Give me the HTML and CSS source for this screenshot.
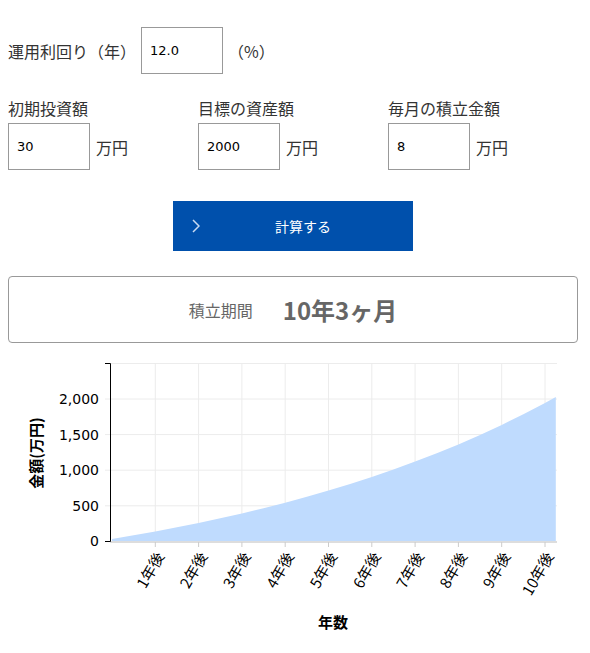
FILE: index.html
```html
<!DOCTYPE html>
<html lang="ja">

<head>
    <meta charset="UTF-8">
    <meta name="viewport" content="width=device-width, initial-scale=1.0">
    <title>積立シミュレーション</title>
    <link rel="stylesheet" href="styles.css">
</head>

<body>
    <main class="calc">
        <!-- 利回り -->
        <div class="rate-row">
            <label class="rate-label" for="rate">運用利回り（年）</label>
            <input type="text" id="rate" class="field" value="12.0">
            <span class="unit unit-rate">（%）</span>
        </div>

        <!-- 金額の入力 -->
        <div class="amount-grid">
            <div class="amount-item">
                <label class="amount-label" for="initial">初期投資額</label>
                <div class="amount-input">
                    <input type="text" id="initial" class="field" value="30">
                    <span class="unit">万円</span>
                </div>
            </div>
            <div class="amount-item">
                <label class="amount-label" for="target">目標の資産額</label>
                <div class="amount-input">
                    <input type="text" id="target" class="field" value="2000">
                    <span class="unit">万円</span>
                </div>
            </div>
            <div class="amount-item">
                <label class="amount-label" for="monthly">毎月の積立金額</label>
                <div class="amount-input">
                    <input type="text" id="monthly" class="field" value="8">
                    <span class="unit">万円</span>
                </div>
            </div>
        </div>

        <button type="button" class="calc-btn">
            <svg class="calc-btn__arrow" width="8" height="14" viewBox="0 0 8 14">
                <path d="M1 1 L7 7 L1 13" fill="none" stroke="#c9dbf2" stroke-width="1.5" />
            </svg>
            <span class="calc-btn__text">計算する</span>
        </button>

        <div class="result">
            <span class="result-label">積立期間</span>
            <span class="result-value">10年3ヶ月</span>
        </div>
    </main>

    <!-- グラフ -->
    <svg class="chart" width="590" height="300" viewBox="0 350 590 300">
        <!-- grid -->
        <g class="grid">
            <line x1="110" y1="363.5" x2="557" y2="363.5" />
            <line x1="105" y1="399" x2="557" y2="399" />
            <line x1="105" y1="434.6" x2="557" y2="434.6" />
            <line x1="105" y1="470.2" x2="557" y2="470.2" />
            <line x1="105" y1="505.8" x2="557" y2="505.8" />
            <line x1="155.3" y1="363" x2="155.3" y2="541" />
            <line x1="198.6" y1="363" x2="198.6" y2="541" />
            <line x1="241.9" y1="363" x2="241.9" y2="541" />
            <line x1="285.2" y1="363" x2="285.2" y2="541" />
            <line x1="328.5" y1="363" x2="328.5" y2="541" />
            <line x1="371.8" y1="363" x2="371.8" y2="541" />
            <line x1="415.1" y1="363" x2="415.1" y2="541" />
            <line x1="458.4" y1="363" x2="458.4" y2="541" />
            <line x1="501.7" y1="363" x2="501.7" y2="541" />
            <line x1="545" y1="363" x2="545" y2="541" />
        </g>

        <!-- area -->
        <path class="area" d="M112,541 L112,538.9 L133.65,535.2 L155.3,531.4 L176.95,527.3 L198.6,522.9 L220.25,518.3
            L241.9,513.4 L263.55,508.2 L285.2,502.7 L306.85,496.8 L328.5,490.6 L350.15,484 L371.8,477
            L393.45,469.5 L415.1,461.6 L436.75,453.3 L458.4,444.4 L480.05,434.9 L501.7,424.9 L523.35,414.2
            L545,402.9 L555.8,397 L555.8,541 Z" />

        <!-- x axis -->
        <line class="x-axis" x1="110" y1="542" x2="557" y2="542" />
        <g class="x-ticks">
            <line x1="155.3" y1="542" x2="155.3" y2="547" />
            <line x1="198.6" y1="542" x2="198.6" y2="547" />
            <line x1="241.9" y1="542" x2="241.9" y2="547" />
            <line x1="285.2" y1="542" x2="285.2" y2="547" />
            <line x1="328.5" y1="542" x2="328.5" y2="547" />
            <line x1="371.8" y1="542" x2="371.8" y2="547" />
            <line x1="415.1" y1="542" x2="415.1" y2="547" />
            <line x1="458.4" y1="542" x2="458.4" y2="547" />
            <line x1="501.7" y1="542" x2="501.7" y2="547" />
            <line x1="545" y1="542" x2="545" y2="547" />
        </g>
        <g class="x-labels">
            <text transform="translate(159,553) rotate(-60)">1年後</text>
            <text transform="translate(202.3,553) rotate(-60)">2年後</text>
            <text transform="translate(245.6,553) rotate(-60)">3年後</text>
            <text transform="translate(288.9,553) rotate(-60)">4年後</text>
            <text transform="translate(332.2,553) rotate(-60)">5年後</text>
            <text transform="translate(375.5,553) rotate(-60)">6年後</text>
            <text transform="translate(418.8,553) rotate(-60)">7年後</text>
            <text transform="translate(462.1,553) rotate(-60)">8年後</text>
            <text transform="translate(505.4,553) rotate(-60)">9年後</text>
            <text transform="translate(548.7,553) rotate(-60)">10年後</text>
        </g>

        <!-- y axis -->
        <path class="y-axis" d="M105,363.5 H110.5 V541.5 H105" />
        <g class="y-labels">
            <text x="99" y="541">0</text>
            <text x="99" y="505.8">500</text>
            <text x="99" y="470.2">1,000</text>
            <text x="99" y="434.6">1,500</text>
            <text x="99" y="399">2,000</text>
        </g>

        <text class="axis-title" x="333" y="621">年数</text>
        <text class="axis-title" transform="translate(35,453) rotate(-90)">金額(万円)</text>
    </svg>
</body>

</html>
```

FILE: styles.css
```css
* {
    margin: 0;
    padding: 0;
    box-sizing: border-box;
}

body {
    font-family: "Noto Sans CJK JP", sans-serif;
    color: #333;
    background-color: #fff;
}

.calc {
    width: 570px;
    margin-left: 8px;
    padding-top: 27px;
}

/* 入力欄 */
.field {
    width: 82px;
    height: 47px;
    border: 1px solid #999;
    padding-left: 8px;
    font-family: "DejaVu Sans", sans-serif;
    font-size: 13px;
    color: #000;
    background: #fff;
    outline: none;
}

.unit {
    font-size: 16px;
    line-height: 1;
}

/* 運用利回り */
.rate-row {
    display: flex;
    align-items: center;
}

.rate-label {
    width: 133px;
    font-size: 16px;
}

.unit-rate {
    margin-left: 5px;
}

/* 金額 */
.amount-grid {
    display: grid;
    grid-template-columns: repeat(3, 190px);
    margin-top: 22px;
}

.amount-label {
    display: block;
    font-size: 16px;
    line-height: 24px;
    margin-bottom: 3px;
}

.amount-input {
    display: flex;
    align-items: center;
    gap: 6px;
}

/* 計算ボタン */
.calc-btn {
    position: relative;
    display: flex;
    align-items: center;
    justify-content: center;
    width: 240px;
    height: 50px;
    margin: 31px auto 0;
    background-color: #0050ac;
    border: none;
    cursor: pointer;
}

.calc-btn__arrow {
    position: absolute;
    left: 19px;
    top: 18px;
}

.calc-btn__text {
    padding-left: 20px;
    font-family: "Noto Sans CJK JP", sans-serif;
    font-size: 14px;
    color: #fff;
}

/* 結果 */
.result {
    display: flex;
    align-items: center;
    justify-content: center;
    gap: 30px;
    height: 67px;
    margin-top: 25px;
    border: 1px solid #999;
    border-radius: 4px;
    color: #666;
}

.result-label {
    font-size: 16px;
}

.result-value {
    font-size: 24px;
    font-weight: bold;
}

/* グラフ */
.chart {
    display: block;
    margin-top: 7px;
}

.grid line {
    stroke: #ececec;
    stroke-width: 1;
}

.area {
    fill: #bfdbfe;
}

.x-axis {
    stroke: #ddd;
    stroke-width: 2;
}

.x-ticks line {
    stroke: #ccc;
    stroke-width: 1;
}

.y-axis {
    fill: none;
    stroke: #000;
    stroke-width: 1;
}

.x-labels text {
    font-family: "Noto Sans CJK JP", sans-serif;
    font-size: 15px;
    text-anchor: end;
    dominant-baseline: central;
    fill: #000;
}

.y-labels text {
    font-family: "DejaVu Sans", sans-serif;
    font-size: 14px;
    text-anchor: end;
    dominant-baseline: central;
    fill: #000;
}

.axis-title {
    font-family: "Noto Sans CJK JP", sans-serif;
    font-size: 15px;
    font-weight: bold;
    text-anchor: middle;
    dominant-baseline: central;
    fill: #000;
}
```
